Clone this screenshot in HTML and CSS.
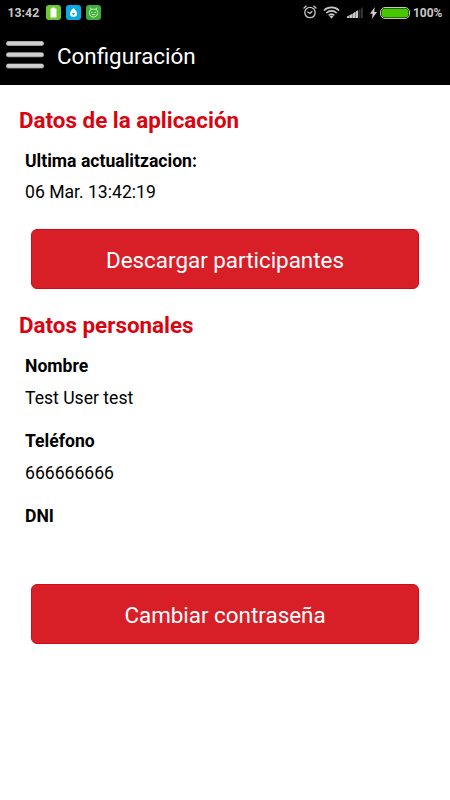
FILE: index.html
```html
<!DOCTYPE html>
<html lang="es">

<head>
    <meta charset="UTF-8">
    <meta name="viewport" content="width=device-width, initial-scale=1.0">
    <title>Configuración</title>
    <link rel="stylesheet" href="styles.css">
</head>

<body>
    <div class="statusbar">
        <span class="time">13:42</span>
        <div class="notifications">
            <svg width="15" height="15" viewBox="0 0 15 15">
                <rect width="15" height="15" rx="3" fill="#6cc832" />
                <path d="M4.5 3.5h1.7v-1h2.6v1h1.7v9h-6z" fill="#fff" />
            </svg>
            <svg width="15" height="15" viewBox="0 0 15 15">
                <rect width="15" height="15" rx="3" fill="#0ca9e4" />
                <path d="M7.5 3c1.3 1.8 3.6 3.2 3.6 5.4a3.6 3.4 0 0 1-7.2 0c0-2.2 2.3-3.6 3.6-5.4z" fill="#fff" />
                <path d="M5.8 8h3.4l-1.7 2.2z" fill="#0ca9e4" />
            </svg>
            <svg width="15" height="15" viewBox="0 0 15 15">
                <rect width="15" height="15" rx="3" fill="#43ad3c" />
                <path d="M4 2.5l1 1.7h5l1-1.7M5 4.2C2.5 6 2.5 12 7.5 12s5-6 2.5-7.8" fill="none" stroke="#c9efc2" stroke-width="1" />
                <path d="M5 7.4h1.5M8.5 7.4h1.5M5.8 9.6h3.4" stroke="#c9efc2" stroke-width="1" />
            </svg>
        </div>
        <div class="system">
            <svg class="alarm" width="14" height="14" viewBox="0 0 14 14" fill="none" stroke="#c8c8c8" stroke-width="1.3" stroke-linecap="round">
                <circle cx="7" cy="7.5" r="5.2" />
                <path d="M1 3l2.2-1.9M13 3l-2.2-1.9M4.8 7l2.2 1.5 2-2" />
            </svg>
            <svg class="wifi" width="17" height="13" viewBox="0 0 17 13" fill="none" stroke="#c8c8c8" stroke-width="1.7">
                <path d="M.9 4.5a11 11 0 0 1 15.2 0M3.3 7a7.5 7.5 0 0 1 10.4 0M5.7 9.3a4.2 4.2 0 0 1 5.6 0" />
                <path d="M8.5 12.6l-2-2.2a3 3 0 0 1 4 0z" fill="#c8c8c8" stroke="none" />
            </svg>
            <svg class="signal" width="16" height="11" viewBox="0 0 16 11">
                <path d="M0 11V9.5l2.7-1.4V11zM3 11V8l2.7-1.5V11zM6 11V6.2l2.5-1.4V11zM8.8 11V4.6L11 3.3V11z" fill="#c8c8c8" />
                <path d="M11.3 11V3l2-1.2V11zM13.8 11V1.4L16 0v11z" fill="#303030" />
            </svg>
            <svg class="bolt" width="7" height="12" viewBox="0 0 7 12">
                <path d="M4.8 0L0 6.7h2.7L1.8 12 7 4.9H4.2z" fill="#d0d0d0" />
            </svg>
            <svg class="battery" width="30" height="12" viewBox="0 0 30 12">
                <rect x=".5" y=".5" width="29" height="11" rx="4.5" fill="#000" stroke="#c8c8c8" />
                <rect x="1.5" y="1.5" width="27" height="9" rx="3.5" fill="#46c800" />
            </svg>
            <span class="percent">100%</span>
        </div>
    </div>

    <header class="navbar">
        <svg class="menu" width="38" height="28" viewBox="0 0 38 28">
            <rect y="0" width="38" height="5" rx="2.5" fill="#888" />
            <rect y="11.3" width="38" height="5" rx="2.5" fill="#888" />
            <rect y="22.5" width="38" height="5" rx="2.5" fill="#888" />
            <rect x=".5" y=".5" width="37" height="3.7" rx="1.8" fill="#d0cece" />
            <rect x=".5" y="11.8" width="37" height="3.7" rx="1.8" fill="#d0cece" />
            <rect x=".5" y="23" width="37" height="3.7" rx="1.8" fill="#d0cece" />
        </svg>
        <h1>Configuración</h1>
    </header>

    <main>
        <section>
            <h2>Datos de la aplicación</h2>
            <dl>
                <dt>Ultima actualitzacion:</dt>
                <dd>06 Mar. 13:42:19</dd>
            </dl>
            <button class="btn">Descargar participantes</button>
        </section>
        <section>
            <h2>Datos personales</h2>
            <dl>
                <dt>Nombre</dt>
                <dd>Test User test</dd>
                <dt>Teléfono</dt>
                <dd>666666666</dd>
                <dt>DNI</dt>
                <dd></dd>
            </dl>
            <button class="btn">Cambiar contraseña</button>
        </section>
    </main>
</body>

</html>
```
FILE: styles.css
```css
body {
    margin: 0;
    background-color: #fff;
    color: #000;
    font-family: Roboto, "Liberation Sans", sans-serif;
}

.statusbar {
    display: flex;
    align-items: center;
    box-sizing: border-box;
    height: 25px;
    padding: 0 8px 0 7.5px;
    background-color: #000;
    color: #c8c8c8;
    font-size: 12px;
    font-weight: 700;
}

.statusbar svg {
    display: block;
}

.time {
    font-size: 12.3px;
}

.notifications {
    display: flex;
    gap: 5px;
    margin-left: 6.5px;
}

.system {
    display: flex;
    align-items: center;
    margin-left: auto;
}

.alarm {
    margin-bottom: 1px;
}

.wifi {
    margin-left: 6px;
}

.signal {
    margin-left: 7px;
}

.bolt {
    margin-left: 7px;
}

.battery {
    margin-left: 3px;
}

.percent {
    margin: 0 -.5px 0 3px;
}

.navbar {
    display: flex;
    align-items: center;
    box-sizing: border-box;
    height: 60px;
    padding-left: 6px;
    background-color: #000;
    color: #fff;
}

.navbar h1 {
    margin: 2px 0 0 13px;
    font-size: 22.4px;
    font-weight: 400;
    line-height: 28px;
}

main {
    padding: 21px 19px 0;
}

h2 {
    margin: 0;
    color: #d9040f;
    font-size: 22.4px;
    font-weight: 700;
    line-height: 28px;
}

dl {
    margin: 17px 6px 27px;
    font-size: 17.6px;
    line-height: 20px;
}

dt {
    font-weight: 700;
}

dd {
    min-height: 20px;
    margin: 11.2px 0 0;
}

dd + dt {
    margin-top: 23.7px;
}

.btn {
    display: block;
    width: 388px;
    height: 60px;
    margin: 0 auto 22.3px;
    padding: 1px 0 0;
    border: 1px solid #d40a14;
    border-radius: 6px;
    background-color: #d81f27;
    color: #fff;
    font-family: inherit;
    font-size: 22.4px;
}
```
